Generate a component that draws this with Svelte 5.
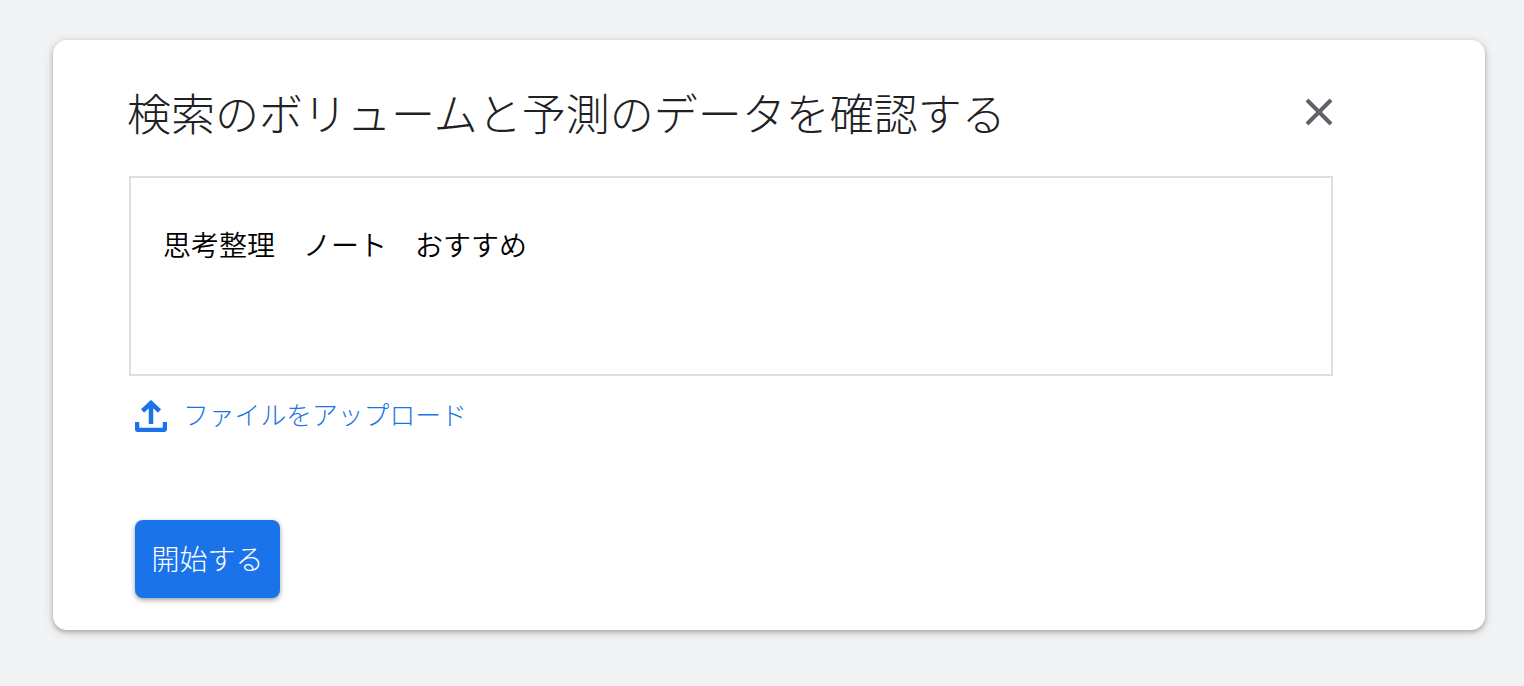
<script>
	const title = '検索のボリュームと予測のデータを確認する';
	let keywords = '思考整理　ノート　おすすめ';
</script>

<div class="page">
	<div class="card">
		<div class="content">
			<div class="head">
				<h2>{title}</h2>
				<button class="close" aria-label="閉じる">
					<svg viewBox="0 0 28 28" width="28" height="28">
						<path d="M2 2 26 26M26 2 2 26" />
					</svg>
				</button>
			</div>
			<div class="box">{keywords}</div>
			<div class="upload">
				<svg viewBox="0 0 32 32" width="32" height="32">
					<path class="tray" d="M2 22v6q0 2 2 2h24q2 0 2-2v-6" />
					<path class="tray" d="M16 24V3M7.500 11 16 3l8.500 8" />
				</svg>
				<span>ファイルをアップロード</span>
			</div>
			<button class="start">開始する</button>
		</div>
	</div>
</div>

<style>
	:global(body) {
		background: #f1f3f4;
		font-family: "Roboto", "Noto Sans CJK JP", sans-serif;
	}

	.page {
		height: 686px;
		padding: 40px 39px 0 53px;
		box-sizing: border-box;
	}

	.card {
		height: 590px;
		background: #fff;
		border-radius: 14px;
		box-shadow: 0 2px 4px rgba(60, 64, 67, 0.35), 0 2px 10px 2px rgba(60, 64, 67, 0.12);
		padding: 0 0 0 75px;
		box-sizing: border-box;
	}

	.content {
		width: 1206px;
	}

	.head {
		height: 136px;
		display: flex;
		align-items: center;
		justify-content: space-between;
		padding-top: 8px;
		box-sizing: border-box;
	}

	h2 {
		margin: 8px 0 0 -1px;
		font-size: 44px;
		font-weight: 300;
		line-height: 60px;
		color: #202124;
	}

	.close {
		background: none;
		border: 0;
		padding: 0;
		width: 30px;
		height: 30px;
		display: flex;
		align-items: center;
		justify-content: center;
	}

	.close path {
		stroke: #5f6368;
		stroke-width: 4;
		fill: none;
	}

	.box {
		margin-left: 1px;
		width: 1204px;
		height: 200px;
		box-sizing: border-box;
		border: 2px solid #dfdfdf;
		padding: 49px 32px 0;
		font-size: 28px;
		line-height: 40px;
		font-weight: 350;
		color: #000;
	}

	.upload {
		display: flex;
		align-items: center;
		gap: 17px;
		margin-top: 24px;
		padding-left: 7px;
		color: #1a73e8;
		font-size: 25.800px;
		font-weight: 300;
		line-height: 32px;
	}

	.upload span {
		margin-left: -1px;
	}

	.tray {
		fill: none;
		stroke: #1a73e8;
		stroke-width: 4.500;
	}

	.start {
		display: block;
		margin: 88px 0 0 7px;
		width: 145px;
		height: 78px;
		padding: 0 0 2px;
		background: #1a73e8;
		color: #fff;
		border: 0;
		border-radius: 8px;
		font-family: inherit;
		font-size: 28px;
		font-weight: 300;
		box-shadow: 0 2px 5px rgba(60, 64, 67, 0.5);
	}
</style>
